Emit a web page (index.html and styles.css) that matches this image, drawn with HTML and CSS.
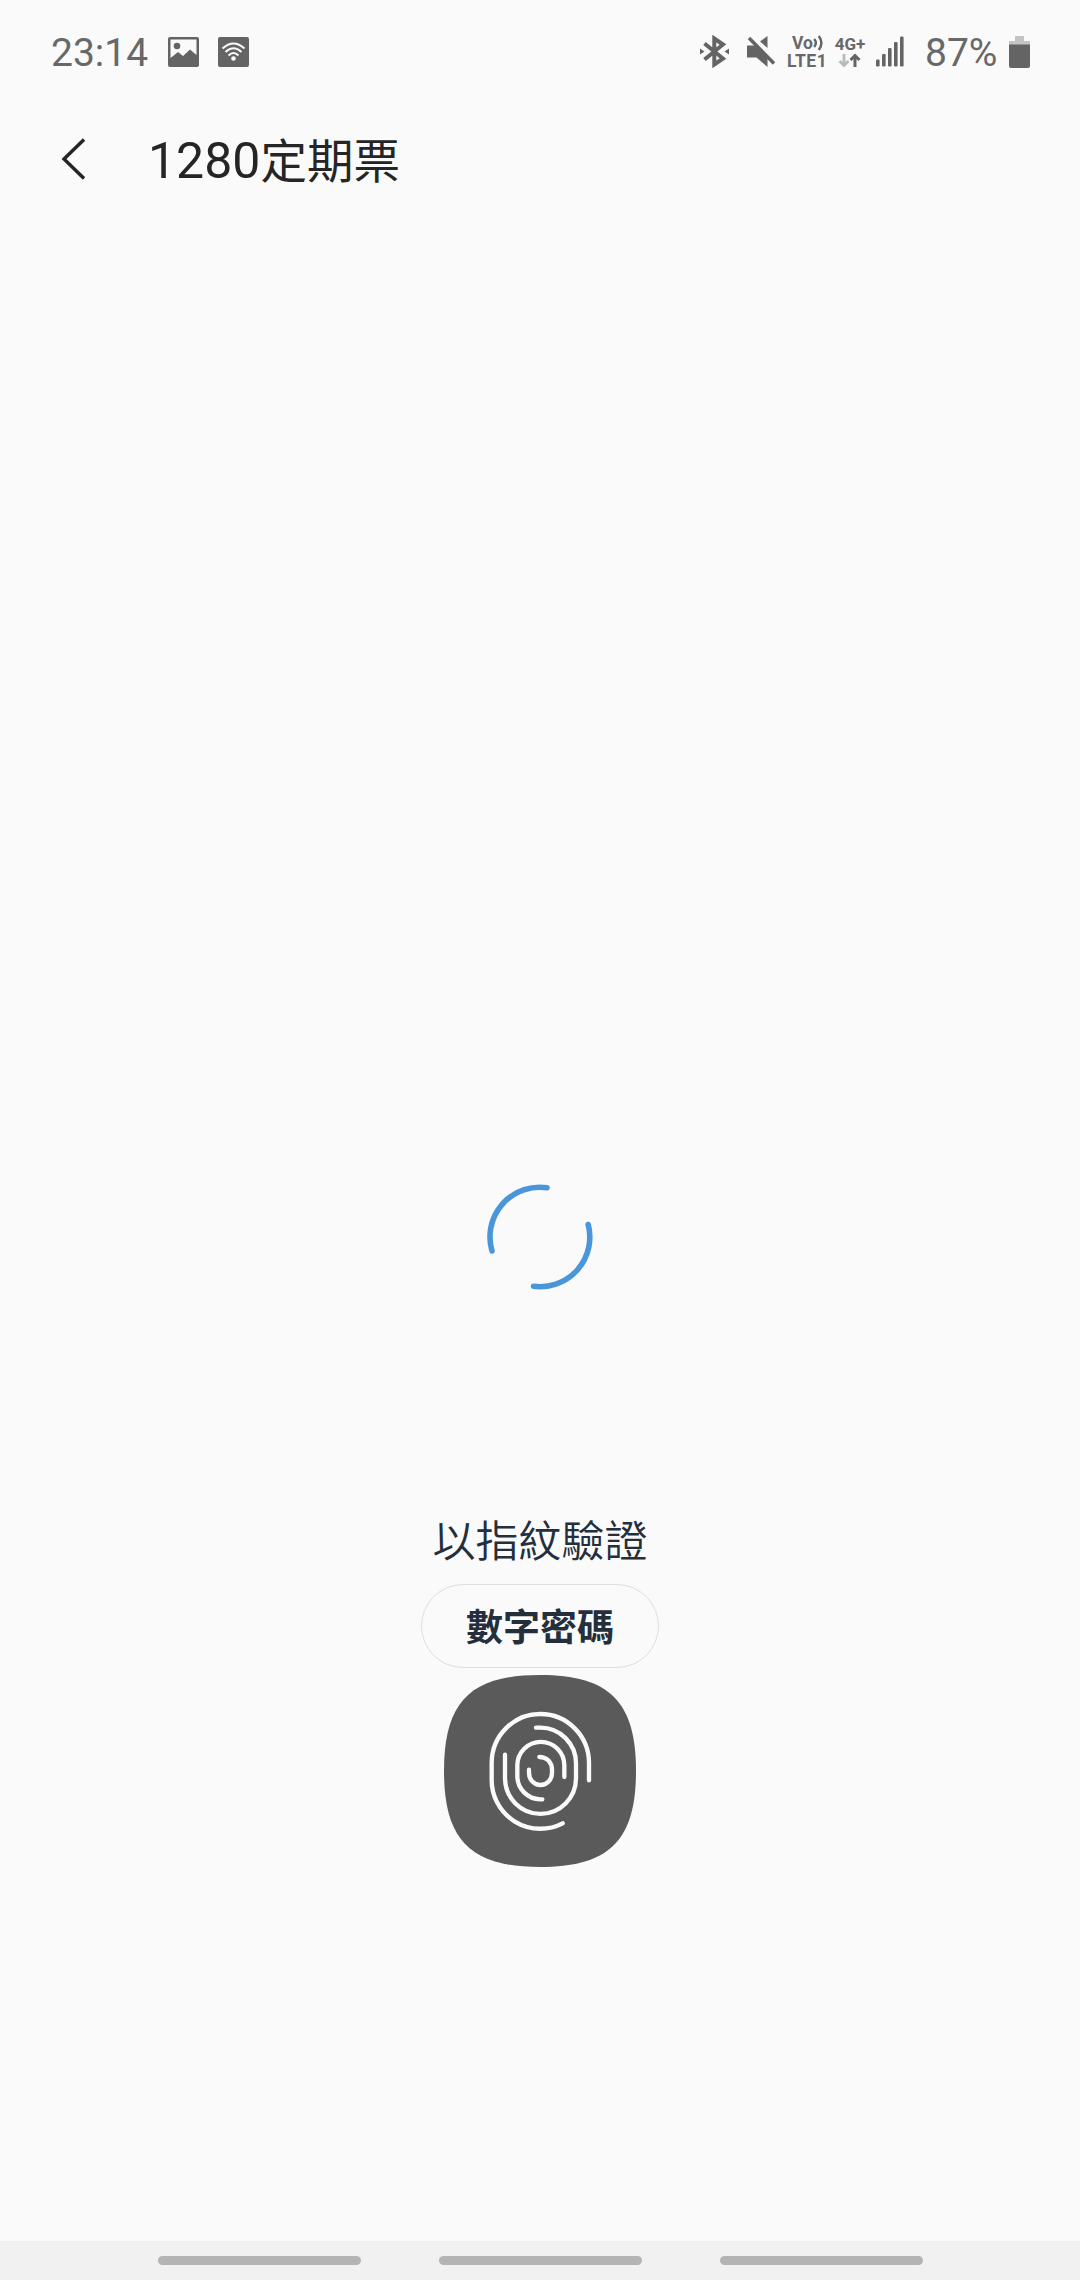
FILE: index.html
```html
<!DOCTYPE html>
<html lang="zh-Hant">
<head>
    <meta charset="UTF-8">
    <meta name="viewport" content="width=device-width, initial-scale=1.0">
    <title>1280定期票</title>
    <link rel="stylesheet" href="styles.css">
</head>
<body>
    <div class="screen">
        <div class="status-bar">
            <span class="time">23:14</span>
            <svg class="icon-image" width="31" height="30" viewBox="0 0 31 30">
                <path fill-rule="evenodd" d="M2 0H29Q31 0 31 2V28Q31 30 29 30H2Q0 30 0 28V2Q0 0 2 0ZM2.5 2.5V21L10 15L15 19L22 12.5L28.5 18V2.5Z"/>
                <circle cx="9" cy="9" r="3.3"/>
            </svg>
            <svg class="icon-wifi" width="31" height="30" viewBox="0 0 31 30">
                <rect width="31" height="30" rx="2"/>
                <g fill="none" stroke="#fafafa" stroke-width="2.1">
                    <path d="M4.5 11.5Q15.5 1.5 26.5 11.5"/>
                    <path d="M7.5 15Q15.5 7.5 23.5 15"/>
                    <path d="M10.5 18.5Q15.5 13.5 20.5 18.5"/>
                </g>
                <circle cx="15.5" cy="21.5" r="2.3" fill="#fafafa"/>
            </svg>
            <div class="status-right">
                <svg width="29" height="33" viewBox="0 0 29 33">
                    <path class="line" stroke-width="4" d="M4.5 8.5L23 23.5L14.3 29.5V3.5L23 9.5L4.5 24.5"/>
                    <path d="M0 13.5L4.5 16.5L0 19.5ZM29 13.5L24.5 16.5L29 19.5Z"/>
                </svg>
                <svg class="icon-mute" width="29" height="33" viewBox="0 0 29 33">
                    <path d="M0 10.5H8L20.5 23V32L9.5 22.5H0ZM20.5 1V13L13 6.5Z"/>
                    <path class="line" stroke-width="3.4" d="M2 3L27 28.5"/>
                </svg>
                <div class="volte">
                    <span class="vo">Vo<svg width="11" height="16" viewBox="0 0 11 16"><path class="line" stroke-width="2.4" d="M1.2 4Q4.5 8 1.2 12M5.8 1Q11 8 5.8 15"/></svg></span>
                    <span>LTE1</span>
                </div>
                <div class="data">
                    <span>4G+</span>
                    <svg width="24" height="15" viewBox="0 0 24 15">
                        <path class="line down" stroke-width="3" d="M6 1V12M1.5 8L6 12.5L10.5 8"/>
                        <path class="line" stroke-width="3" d="M17 14V3M12.5 7L17 2.5L21.5 7"/>
                    </svg>
                </div>
                <svg class="icon-signal" width="28" height="31" viewBox="0 0 28 31">
                    <rect x="0" y="23.5" width="3.6" height="7" rx="1.2"/>
                    <rect x="6" y="18" width="3.6" height="12.5" rx="1.2"/>
                    <rect x="12" y="12" width="3.6" height="18.5" rx="1.2"/>
                    <rect x="18" y="6" width="3.6" height="24.5" rx="1.2"/>
                    <rect x="24" y="0.5" width="3.6" height="30" rx="1.2"/>
                </svg>
                <span class="percent">87%</span>
                <svg class="icon-battery" width="21" height="32" viewBox="0 0 21 32">
                    <path fill="#c4c4c4" d="M6 0H15V5H21V9H0V5H6Z"/>
                    <path d="M0 8.5H21V30Q21 32 19 32H2Q0 32 0 30Z"/>
                </svg>
            </div>
        </div>

        <div class="title-bar">
            <svg class="back" width="24" height="44" viewBox="0 0 24 44">
                <path d="M23 1.5L3 21L23 40.5"/>
            </svg>
            <h1>1280<span>定期票</span></h1>
        </div>

        <div class="content">
            <svg class="spinner" width="106" height="106" viewBox="-53 -53 106 106">
                <path d="M7 -49.2A49.7 49.7 0 0 0 -48 14"/>
                <path d="M48.2 -12.5A49.7 49.7 0 0 1 -6.5 49.3"/>
            </svg>
            <p class="message">以指紋驗證</p>
            <button class="pin-button">數字密碼</button>
            <svg class="fingerprint" width="192" height="192" viewBox="0 0 576 576">
                <path class="plate" d="M288 0C496 0 576 80 576 288S496 576 288 576S0 496 0 288S80 0 288 0Z"/>
                <g class="ridges" transform="translate(-42 -46)">
                    <path d="M477 362V310A146 147 0 0 0 185 310V360A146 146 0 0 0 398 491"/>
                    <path d="M318 204H331A107 107 0 0 1 438 311V356A106.5 106.5 0 0 1 225 356V285"/>
                    <path d="M337 419H331A70 70 0 0 1 262 349V317A70.5 70.5 0 0 1 403 317V352"/>
                    <path d="M328 292C352 292 366 310 366 330V340A34.5 36 0 0 1 297 340V330"/>
                </g>
            </svg>
        </div>

        <div class="nav-bar">
            <span></span>
            <span></span>
            <span></span>
        </div>
    </div>
</body>
</html>
```
FILE: styles.css
```css
* {
    box-sizing: border-box;
}
body {
    margin: 0;
    background-color: #fafafa;
    font-family: Roboto, "Noto Sans CJK TC", sans-serif;
}
.screen {
    display: flex;
    flex-direction: column;
    width: 1080px;
    height: 2280px;
}
svg {
    display: block;
    flex: none;
}

/* status bar */
.status-bar {
    display: flex;
    align-items: center;
    height: 103px;
    padding: 0 50px 0 51px;
    color: #686868;
    fill: #646464;
}
.time, .percent {
    padding-top: 2px;
    font-size: 39px;
    line-height: 46px;
}
.time {
    width: 117px;
}
.icon-wifi {
    margin-left: 19px;
}
.line {
    fill: none;
    stroke: #646464;
}
.down {
    stroke: #bbb;
}
.status-right {
    display: flex;
    align-items: center;
    margin-left: auto;
}
.icon-mute {
    margin-left: 18px;
}
.volte {
    width: 42px;
    margin-left: 11px;
    font-size: 17.5px;
    line-height: 18px;
    font-weight: 700;
    letter-spacing: 0.5px;
}
.volte span {
    display: block;
}
.volte .vo {
    display: flex;
    align-items: center;
    justify-content: center;
    letter-spacing: 0;
}
.data {
    display: flex;
    flex-direction: column;
    align-items: center;
    width: 34px;
    margin-left: 4px;
    font-size: 17px;
    line-height: 18px;
    font-weight: 700;
}
.icon-signal {
    margin-left: 9px;
}
.percent {
    width: 84px;
    margin-left: 21px;
}

/* title */
.title-bar {
    display: flex;
    align-items: center;
    height: 114px;
    padding-left: 61px;
}
.back {
    margin-bottom: 1px;
    fill: none;
    stroke: #252525;
    stroke-width: 3.4;
}
h1 {
    margin: 2px 0 0 63px;
    color: #252525;
    font-size: 50px;
    line-height: 60px;
    font-weight: 400;
}
h1 span {
    font-size: 46.5px;
}

/* fingerprint check */
.content {
    display: flex;
    flex: 1;
    flex-direction: column;
    align-items: center;
    padding-top: 967px;
}
.spinner {
    fill: none;
    stroke: #4a96db;
    stroke-width: 5.6;
    stroke-linecap: round;
}
.message {
    margin: 216px 0 0;
    color: #252f3b;
    font-size: 43px;
    line-height: 72px;
    font-weight: 350;
}
.pin-button {
    width: 238px;
    height: 84px;
    margin: 6px 0 7px;
    padding: 0 0 2px;
    border: 1px solid #dedede;
    border-radius: 42px;
    background-color: #fafafa;
    color: #252f3b;
    font-family: inherit;
    font-size: 37px;
    font-weight: 700;
}
.plate {
    fill: #5a5a5a;
}
.ridges {
    fill: none;
    stroke: #fafafa;
    stroke-width: 13;
    stroke-linecap: round;
}

/* navigation bar */
.nav-bar {
    display: flex;
    justify-content: center;
    gap: 78px;
    height: 39px;
    padding: 15px 0 0;
    background-color: #f1f1f1;
}
.nav-bar span {
    width: 203px;
    height: 9px;
    border-radius: 5px;
    background-color: #b4b4b4;
}
```
